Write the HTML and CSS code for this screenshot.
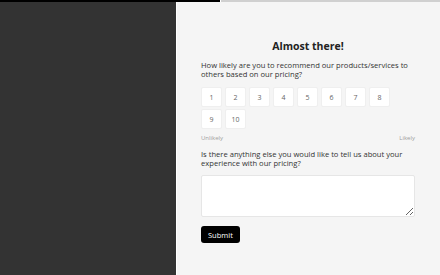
FILE: index.html
```html
<!DOCTYPE html>
<html lang="en">
<head>
    <meta charset="UTF-8">
    <meta name="viewport" content="width=device-width, initial-scale=1.0">
    <title>Pricing Survey</title>
    <link rel="stylesheet" href="styles.css">
</head>
<body>
    <div class="progress">
        <div class="progress-fill"></div>
    </div>
    <div class="layout">
        <div class="sidebar"></div>
        <div class="panel">
            <h1>Almost there!</h1>

            <p class="question">How likely are you to recommend our products/services to others based on our pricing?</p>
            <div class="scale">
                <button class="score">1</button>
                <button class="score">2</button>
                <button class="score">3</button>
                <button class="score">4</button>
                <button class="score">5</button>
                <button class="score">6</button>
                <button class="score">7</button>
                <button class="score">8</button>
                <button class="score">9</button>
                <button class="score">10</button>
            </div>
            <div class="scale-labels">
                <span>Unlikely</span>
                <span>Likely</span>
            </div>

            <p class="question">Is there anything else you would like to tell us about your experience with our pricing?</p>
            <textarea class="feedback"></textarea>

            <button class="submit">Submit</button>
        </div>
    </div>
</body>
</html>
```

FILE: styles.css
```css
* {
    box-sizing: border-box;
}
body {
    margin: 0;
    font-family: "Open Sans", Arial, sans-serif;
    background: #f5f5f5;
    height: 275px;
    display: flex;
    flex-direction: column;
    overflow: hidden;
}
.progress {
    height: 2px;
    background: #d0d0d0;
}
.progress-fill {
    width: 221px;
    height: 100%;
    background: #000;
    border-right: 1px solid #fff;
}
.layout {
    flex: 1;
    display: flex;
}
.sidebar {
    width: 177px;
    background: #333;
    border-right: 1px solid #fff;
}
.panel {
    flex: 1;
    padding: 37px 25px 0 24px;
    background: #f5f5f5;
}
h1 {
    margin: 0 0 8px;
    text-align: center;
    font-size: 10.5px;
    line-height: 14px;
    font-weight: 700;
    color: #222;
}
.question {
    margin: 0;
    font-size: 7.6px;
    line-height: 9px;
    color: #333;
}
.scale {
    display: flex;
    flex-wrap: wrap;
    gap: 2px 3px;
    width: 200px;
    margin-top: 8px;
}
.score {
    width: 21px;
    height: 20px;
    padding: 0;
    border: 1px solid #efefef;
    border-radius: 2px;
    background: #fff;
    font-family: inherit;
    font-size: 7px;
    color: #666;
}
.scale-labels {
    display: flex;
    justify-content: space-between;
    margin: 5px 0 8px;
    font-size: 6px;
    line-height: 8px;
    color: #a0a0a0;
}
.feedback {
    display: block;
    width: 100%;
    height: 42px;
    margin: 7px 0 9px;
    border: 1px solid #e6e6e6;
    border-radius: 2px;
    background: #fff;
    resize: vertical;
}
.submit {
    display: block;
    padding: 0 7px;
    height: 17px;
    border: none;
    border-radius: 3px;
    background: #000;
    color: #fff;
    font-family: inherit;
    font-size: 7.5px;
}
```
